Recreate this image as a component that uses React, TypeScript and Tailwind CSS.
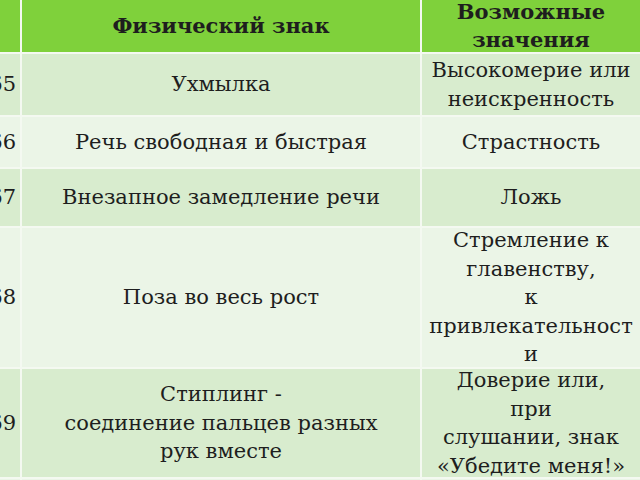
const rows = [
  {
    n: "65",
    sign: ["Ухмылка"],
    meaning: ["Высокомерие или", "неискренность"],
    dark: true,
  },
  {
    n: "66",
    sign: ["Речь свободная и быстрая"],
    meaning: ["Страстность"],
    dark: false,
  },
  {
    n: "67",
    sign: ["Внезапное замедление речи"],
    meaning: ["Ложь"],
    dark: true,
  },
  {
    n: "68",
    sign: ["Поза во весь рост"],
    meaning: ["Стремление к", "главенству,", "к", "привлекательност", "и"],
    dark: false,
  },
  {
    n: "69",
    sign: ["Стиплинг -", "соединение пальцев разных", "рук вместе"],
    meaning: ["Доверие или,", "при", "слушании, знак", "«Убедите меня!»"],
    dark: true,
  },
  { n: "70", sign: [""], meaning: [""], dark: false },
];

function Lines({ lines }: { lines: string[] }) {
  return (
    <div className="flex flex-col items-center text-center whitespace-nowrap">
      {lines.map((line, i) => (
        <span key={i}>{line}</span>
      ))}
    </div>
  );
}

export default function App() {
  return (
    <div className="h-[480px] w-[640px] overflow-hidden bg-[#f4f9f1] font-['DejaVu_Serif',serif] text-[21px] leading-[28.5px] text-[#1e1e1e]">
      <div className="grid grid-cols-[20px_398px_218px] grid-rows-[52px_61px_50px_57px_139px_108px_40px] gap-[2px]">
        {/* header */}
        <div className="bg-[#7fd13b]" />
        <div className="flex items-center justify-center bg-[#7fd13b] font-bold">
          Физический знак
        </div>
        <div className="flex items-center justify-center bg-[#7fd13b] font-bold">
          <Lines lines={["Возможные", "значения"]} />
        </div>

        {rows.map((row) => {
          const bg = row.dark ? "bg-[#d8ecce]" : "bg-[#ebf5e7]";
          return [
            <div
              key={row.n + "a"}
              className={`flex items-center justify-end pr-[4px] whitespace-nowrap ${bg}`}
            >
              <span>{row.n}</span>
            </div>,
            <div key={row.n + "b"} className={`flex items-center justify-center ${bg}`}>
              <Lines lines={row.sign} />
            </div>,
            <div key={row.n + "c"} className={`flex items-center justify-center ${bg}`}>
              <Lines lines={row.meaning} />
            </div>,
          ];
        })}
      </div>
    </div>
  );
}
